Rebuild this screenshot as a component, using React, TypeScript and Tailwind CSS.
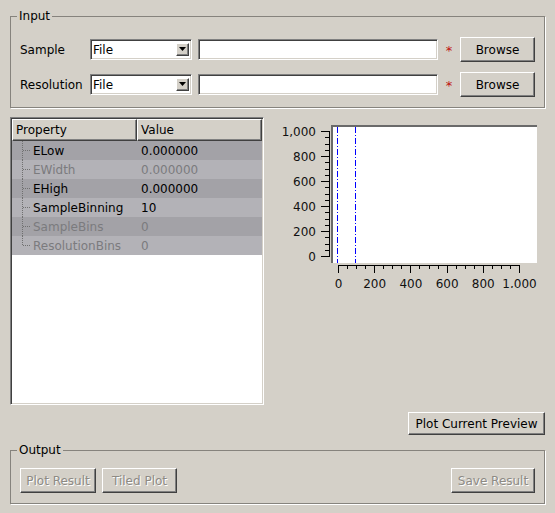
import React from 'react';

const rows = [
    { name: 'ELow', value: '0.000000', enabled: true },
    { name: 'EWidth', value: '0.000000', enabled: false },
    { name: 'EHigh', value: '0.000000', enabled: true },
    { name: 'SampleBinning', value: '10', enabled: true },
    { name: 'SampleBins', value: '0', enabled: false },
    { name: 'ResolutionBins', value: '0', enabled: false },
];

const raised =
    'border border-t-white border-l-white border-r-[#404040] border-b-[#404040] shadow-[inset_-1px_-1px_0_#808080]';
const sunken =
    'border border-t-[#808080] border-l-[#808080] border-r-white border-b-white shadow-[inset_1px_1px_0_#404040,inset_-1px_-1px_0_#d4d0c8]';

function Button({ label, width, disabled }: { label: string; width: string; disabled?: boolean }) {
    return (
        <button
            className={`${raised} ${width} h-[25px] bg-[#d4d0c8] flex items-center justify-center ${
                disabled ? 'text-[#8d8a84] [text-shadow:1px_1px_0_#ffffff]' : 'text-black'
            }`}
        >
            {label}
        </button>
    );
}

function Combo() {
    return (
        <div className={`${sunken} w-[102px] h-[21px] bg-white flex items-center justify-between pl-[2px]`}>
            <span>File</span>
            <div
                className={`${raised} w-[13px] h-[13px] mr-[2px] mb-[1px] bg-[#d4d0c8] border-t-[#ececec] border-l-[#ececec] flex items-center justify-center`}
            >
                <svg width="7" height="4" viewBox="0 0 7 4">
                    <path d="M0 0h7L3.5 4z" fill="#000" />
                </svg>
            </div>
        </div>
    );
}

function FileRow({ label }: { label: string }) {
    return (
        <div className="flex items-center h-[25px]">
            <span className="w-[70px]">{label}</span>
            <Combo />
            <div className={`${sunken} ml-[6px] w-[240px] h-[21px] bg-white`} />
            <span className="w-[22px] text-center text-[#c01010] text-[13px] leading-none mt-[2px]">*</span>
            <Button label="Browse" width="w-[75px]" />
        </div>
    );
}

function GroupBox({ title, className, children }: { title: string; className: string; children: React.ReactNode }) {
    return (
        <div className={`relative border border-[#86837d] shadow-[1px_1px_0_#ffffff] ${className}`}>
            <span className="absolute left-[6px] top-[-8px] px-[2px] leading-[14px] bg-[#d4d0c8]">{title}</span>
            {children}
        </div>
    );
}

function TreeLines({ last }: { last: boolean }) {
    return (
        <svg width="21" height="19" className="shrink-0">
            <line x1="10.5" y1="0" x2="10.5" y2={last ? 10 : 19} stroke="#707070" strokeDasharray="1 1" />
            <line x1="11" y1="9.5" x2="19" y2="9.5" stroke="#707070" strokeDasharray="1 1" />
        </svg>
    );
}

function PropertyTable() {
    return (
        <div className={`${sunken} w-[254px] h-[288px] bg-white p-[1px] flex flex-col`}>
            <div className="flex h-[22px] shrink-0">
                <div className={`${raised} w-[125px] bg-[#d4d0c8] pl-[3px] flex items-center`}>Property</div>
                <div className={`${raised} flex-1 bg-[#d4d0c8] pl-[3px] flex items-center`}>Value</div>
            </div>
            {rows.map((r, i) => (
                <div
                    key={r.name}
                    className={`flex h-[19px] items-center ${i % 2 === 0 ? 'bg-[#a3a2a7]' : 'bg-[#b3b2b7]'} ${
                        r.enabled ? 'text-black' : 'text-[#7b7b7e]'
                    }`}
                >
                    <div className="w-[125px] flex items-center">
                        <TreeLines last={i === rows.length - 1} />
                        <span>{r.name}</span>
                    </div>
                    <span className="pl-[4px]">{r.value}</span>
                </div>
            ))}
        </div>
    );
}

function PreviewPlot() {
    const yTicks = [0, 200, 400, 600, 800, 1000];
    const yPos = (v: number) => 256 - (v / 1000) * 125;
    const xPos = (v: number) => 338 + (v / 1000) * 181;
    const fmt = (v: number) => (v === 1000 ? '1,000' : String(v));
    const minors: number[] = [];
    for (let v = 0; v < 1000; v += 50) if (v % 200 !== 0) minors.push(v);

    return (
        <svg width="281" height="180" viewBox="264 117 281 180" className="block">
            <defs>
                <clipPath id="xlabels">
                    <rect x="264" y="270" width="281" height="18" />
                </clipPath>
            </defs>
            <rect x="331" y="125" width="206" height="138" fill="#ffffff" />
            <rect x="331" y="125" width="206" height="2" fill="#6a6a6a" />
            <rect x="331" y="125" width="2" height="138" fill="#6a6a6a" />

            <g stroke="#0000ff" strokeDasharray="6 2 1 2">
                <line x1="337.5" y1="127" x2="337.5" y2="263" />
                <line x1="355.5" y1="127" x2="355.5" y2="263" />
            </g>

            <g stroke="#000" shapeRendering="crispEdges">
                <line x1="329.5" y1="131" x2="329.5" y2="257" />
                {yTicks.map((v) => (
                    <line key={v} x1="321" y1={Math.round(yPos(v)) + 0.5} x2="330" y2={Math.round(yPos(v)) + 0.5} />
                ))}
                {minors.map((v) => (
                    <line key={v} x1="325" y1={Math.round(yPos(v)) + 0.5} x2="330" y2={Math.round(yPos(v)) + 0.5} />
                ))}
                <line x1="338" y1="265.5" x2="520" y2="265.5" />
                {yTicks.map((v) => (
                    <line key={v} x1={Math.round(xPos(v)) + 0.5} y1="265" x2={Math.round(xPos(v)) + 0.5} y2="273" />
                ))}
                {minors.map((v) => (
                    <line key={v} x1={Math.round(xPos(v)) + 0.5} y1="265" x2={Math.round(xPos(v)) + 0.5} y2="269" />
                ))}
            </g>

            <g fontFamily="'DejaVu Sans', sans-serif" fontSize="12" fill="#111">
                {yTicks.map((v) => (
                    <text key={v} x="316" y={Math.round(yPos(v)) + 5} textAnchor="end">
                        {fmt(v)}
                    </text>
                ))}
                <g clipPath="url(#xlabels)">
                    {yTicks.map((v) => (
                        <text key={v} x={xPos(v) + 0.5} y="288" textAnchor="middle">
                            {fmt(v)}
                        </text>
                    ))}
                </g>
            </g>
        </svg>
    );
}

export default function App() {
    return (
        <div className="w-[555px] h-[513px] bg-[#d4d0c8] text-black text-[12px] leading-[14px] font-['DejaVu_Sans',sans-serif] pt-[16px] pl-[10px] pr-[10px] overflow-hidden">
            {/* Input */}
            <GroupBox title="Input" className="h-[92px] pt-[20px] pl-[9px] flex flex-col gap-[10px]">
                <FileRow label="Sample" />
                <FileRow label="Resolution" />
            </GroupBox>

            {/* Properties + preview */}
            <div className="flex mt-[9px]">
                <PropertyTable />
                <PreviewPlot />
            </div>

            <div className="flex justify-end mt-[7px]">
                <button className={`${raised} w-[137px] h-[23px] bg-[#d4d0c8] flex items-center justify-center`}>
                    Plot Current Preview
                </button>
            </div>

            {/* Output */}
            <GroupBox title="Output" className="mt-[15px] h-[54px] pt-[17px] pl-[9px] pr-[9px] flex">
                <div className="flex gap-[6px]">
                    <Button label="Plot Result" width="w-[76px]" disabled />
                    <Button label="Tiled Plot" width="w-[75px]" disabled />
                </div>
                <div className="ml-auto">
                    <Button label="Save Result" width="w-[84px]" disabled />
                </div>
            </GroupBox>
        </div>
    );
}
